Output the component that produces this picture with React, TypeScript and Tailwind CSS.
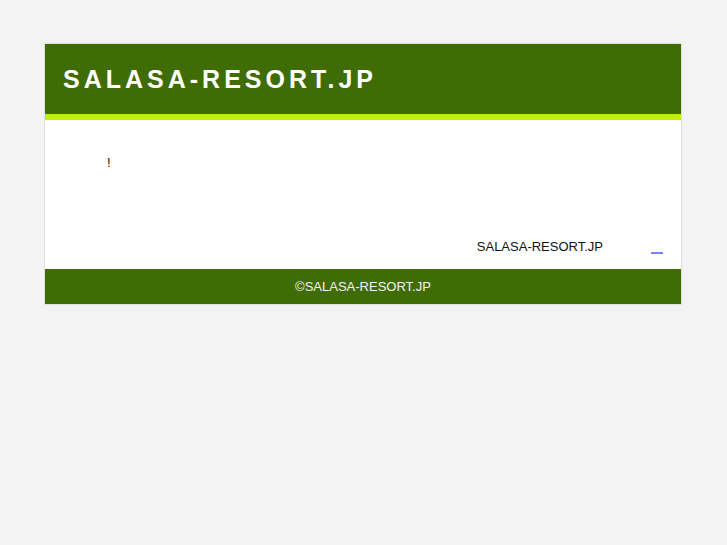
const SITE_NAME = 'SALASA-RESORT.JP';

export default function App() {
    return (
        <div className="min-h-screen bg-[#f3f3f3] pt-11 pr-[46px] pl-[45px] text-[13px] leading-5 text-[#111] font-['Liberation_Sans',Arial,sans-serif]">
            <div className="bg-white shadow-[0_0_1px_1px_rgba(0,0,0,0.08)]">

                {/* Header */}
                <header className="border-b-[6px] border-[#c1f000] bg-[#3f6c04] px-[18px] py-[17px]">
                    <h1 className="text-[25px] leading-9 font-bold tracking-[4px] text-white">{SITE_NAME}</h1>
                </header>

                {/* Message */}
                <main className="px-[18px] pt-[33px] pb-3">
                    <p className="pl-11">!</p>
                    <p className="mt-16 flex justify-end gap-12">
                        <span>{SITE_NAME}</span>
                        <a href="#" aria-label="Link" className="h-[17px] w-3 border-b-2 border-solid border-b-[#7f7fff]" />
                    </p>
                </main>

                {/* Footer */}
                <footer className="bg-[#3f6c04] pt-2 pb-[7px] text-center text-[#f3f3f3]">
                    ©{SITE_NAME}
                </footer>
            </div>
        </div>
    );
}
